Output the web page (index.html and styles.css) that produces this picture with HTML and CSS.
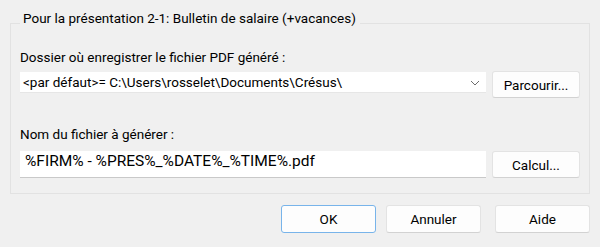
FILE: index.html
```html
<!DOCTYPE html>
<html lang="fr">
<head>
<meta charset="utf-8"/>
<title>Exportation PDF</title>
<link rel="stylesheet" href="styles.css">
</head>
<body>
<div class="dialog">
  <fieldset class="group">
    <legend>Pour la présentation 2-1: Bulletin de salaire (+vacances)</legend>
    <div class="field-label">Dossier où enregistrer le fichier PDF généré :</div>
    <div class="row">
      <div class="combo">
        <span>&lt;par défaut&gt;= C:\Users\rosselet\Documents\Crésus\</span>
        <svg class="chevron" width="10" height="6" viewBox="0 0 10 6"><path d="M1 1 L5 5 L9 1" fill="none" stroke="#6d6d6d" stroke-width="1"/></svg>
      </div>
      <button class="btn">Parcourir...</button>
    </div>
    <div class="field-label second">Nom du fichier à générer :</div>
    <div class="row row-name">
      <div class="textbox">%FIRM% - %PRES%_%DATE%_%TIME%.pdf</div>
      <button class="btn">Calcul...</button>
    </div>
  </fieldset>
  <div class="actions">
    <button class="btn btn-wide btn-default">OK</button>
    <button class="btn btn-wide">Annuler</button>
    <button class="btn btn-wide btn-help">Aide</button>
  </div>
</div>
</body>
</html>
```

FILE: styles.css
```css
body {
  margin: 0;
  background-color: #f0f0f0;
  font-family: Roboto, "Noto Sans", sans-serif;
  font-size: 13.5px;
  color: #000;
}
.dialog {
  padding: 10px 10px 0 10px;
}
.group {
  margin: 0;
  padding: 0 9px 15px 9px;
  border: 1px solid #e2e2e2;
  min-width: 0;
}
.group legend {
  padding: 0 4px 10px 3px;
  margin-left: 0;
  line-height: 16px;
}
.field-label {
  line-height: 16px;
  margin-top: 13px;
}
.field-label.second {
  margin-top: 28px;
}
.row {
  display: flex;
  align-items: flex-start;
  gap: 6px;
  margin-top: 6px;
}
.row-name {
  margin-top: 9px;
}
.combo {
  flex: 1;
  display: flex;
  align-items: center;
  justify-content: space-between;
  height: 20px;
  margin-top: 1px;
  padding: 0 6px 0 3px;
  background-color: #fff;
  border-bottom: 1px solid #e6e6e6;
}
.chevron {
  display: block;
  margin-top: 1px;
}
.textbox {
  flex: 1;
  height: 26px;
  line-height: 21px;
  padding: 0 5px;
  font-size: 15.5px;
  background-color: #fff;
  border-bottom: 1px solid #c9c9c9;
}
.btn {
  width: 88px;
  height: 27px;
  font-family: inherit;
  font-size: 13.5px;
  color: #000;
  background-color: #fdfdfd;
  border: 1px solid #e3e3e3;
  border-bottom-color: #d2d2d2;
  border-radius: 3px;
  padding: 0;
}
.actions {
  display: flex;
  justify-content: flex-end;
  gap: 10px;
  margin-top: 11px;
}
.btn-wide {
  width: 95px;
  height: 28px;
}
.btn-default {
  border: 1px solid #78b4ea;
}
.btn-help {
  margin-left: 4px;
}
```
